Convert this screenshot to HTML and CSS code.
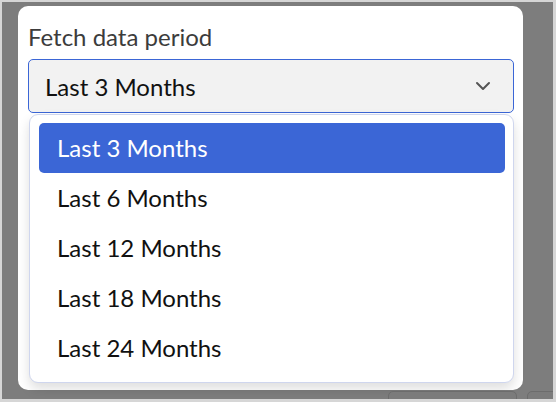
FILE: index.html
```html
<!DOCTYPE html>
<html>
<head>
<meta charset="utf-8">
<link rel="stylesheet" href="styles.css">
</head>
<body>
<div class="screen">
  <div class="card">
    <div class="label">Fetch data period</div>
    <div class="select">
      <span class="value">Last 3 Months</span>
      <svg class="chev" width="16" height="10" viewBox="0 0 16 10"><path d="M2 2 L8 8 L14 2" fill="none" stroke="#555" stroke-width="2" stroke-linecap="round" stroke-linejoin="round"/></svg>
    </div>
    <ul class="list">
      <li class="item active">Last 3 Months</li>
      <li class="item">Last 6 Months</li>
      <li class="item">Last 12 Months</li>
      <li class="item">Last 18 Months</li>
      <li class="item">Last 24 Months</li>
    </ul>
  </div>
  <div class="footer">
    <div class="btn btn-a"></div>
    <div class="btn btn-b"></div>
  </div>
</div>
</body>
</html>
```
FILE: styles.css
```css
html, body {
  margin: 0;
  padding: 0;
  background: #d6d6d6;
  font-family: Lato, "Open Sans", sans-serif;
}
.screen {
  margin: 2px 3px 0 2px;
  height: 397px;
  background: #7d7d7d;
  overflow: hidden;
  display: flex;
  flex-direction: column;
}
.card {
  margin: 4px 0 0 16px;
  width: 505px;
  height: 384px;
  flex-shrink: 0;
  box-sizing: border-box;
  background: #fff;
  border-radius: 10px;
  padding: 0 9px 0 10px;
  display: flex;
  flex-direction: column;
}
.card > * {
  flex-shrink: 0;
}
.label {
  color: #3c3c3c;
  font-size: 24px;
  line-height: 28px;
  margin-top: 17px;
  margin-bottom: 8px;
}
.select {
  height: 54px;
  box-sizing: border-box;
  border: 1.5px solid #3b66d6;
  border-radius: 5px;
  background: #f2f2f2;
  display: flex;
  align-items: center;
  justify-content: space-between;
  padding: 0 22px 0 16px;
}
.value {
  font-size: 24px;
  color: #111;
}
.list {
  list-style: none;
  margin: 1px 0 0 1px;
  padding: 8px 8px 9px 9px;
  border: 1px solid #cfd6ee;
  border-radius: 9px;
  background: #fff;
  box-shadow: 0 6px 12px rgba(0,0,0,0.13);
}
.item {
  height: 50px;
  line-height: 50px;
  padding-left: 18px;
  font-size: 24px;
  color: #111;
  border-radius: 5px;
}
.item.active {
  background: #3b66d6;
  color: #fff;
}
.footer {
  display: flex;
  margin-top: 1px;
  padding-left: 386px;
  gap: 10px;
}
.btn {
  height: 30px;
  box-sizing: border-box;
  border: 1px solid #6c6c6c;
  border-radius: 5px;
  background: #7b7b7b;
  flex-shrink: 0;
}
.btn-a { width: 129px; }
.btn-b { width: 60px; }
```
